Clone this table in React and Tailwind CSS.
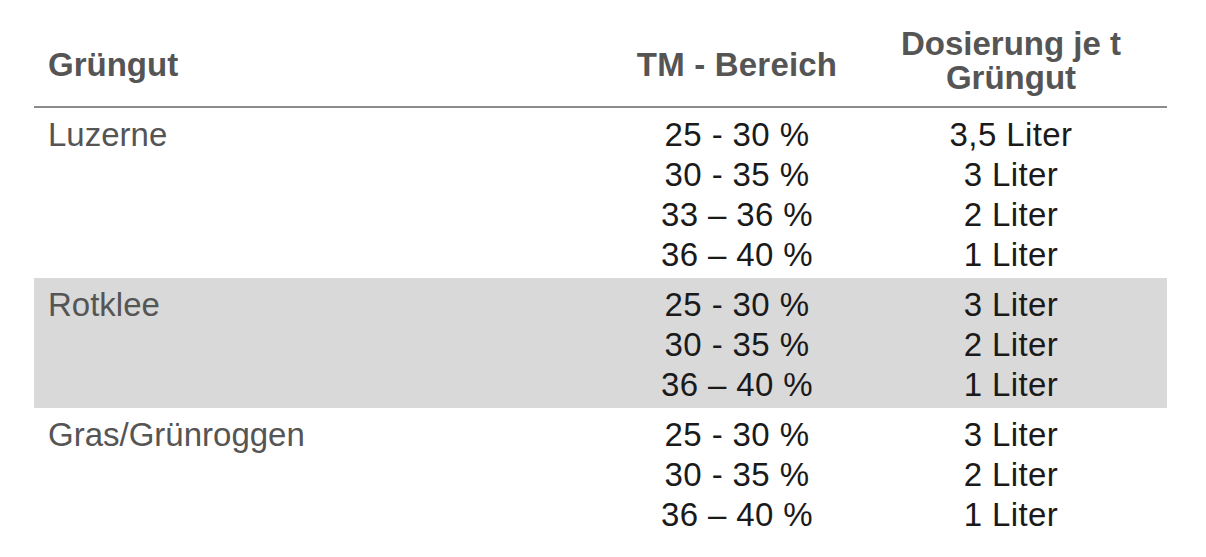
const groups = [
  {
    name: 'Luzerne',
    rows: [
      ['25 - 30 %', '3,5 Liter'],
      ['30 - 35 %', '3 Liter'],
      ['33 – 36 %', '2 Liter'],
      ['36 – 40 %', '1 Liter'],
    ],
  },
  {
    name: 'Rotklee',
    shaded: true,
    rows: [
      ['25 - 30 %', '3 Liter'],
      ['30 - 35 %', '2 Liter'],
      ['36 – 40 %', '1 Liter'],
    ],
  },
  {
    name: 'Gras/Grünroggen',
    rows: [
      ['25 - 30 %', '3 Liter'],
      ['30 - 35 %', '2 Liter'],
      ['36 – 40 %', '1 Liter'],
    ],
  },
]

export default function App() {
  return (
    <div className="min-h-[557px] w-[1206px] bg-white font-['Liberation_Sans',Arial,sans-serif]">
      <div className="ml-[34px] w-[1133px]">
        {/* Kopfzeile */}
        <div className="grid grid-cols-[585px_236px_312px] items-center border-b-2 border-[#8c8c8c] pt-[27px] pb-[11px] text-[33px] font-bold leading-[34px] text-[#555]">
          <div className="pl-[14px] pt-[7px]">Grüngut</div>
          <div className="pt-[7px] text-center tracking-[0.2px]">TM - Bereich</div>
          <div className="text-center">
            Dosierung je t
            <br />
            Grüngut
          </div>
        </div>

        {groups.map((g) => (
          <div
            key={g.name}
            className={`grid grid-cols-[585px_236px_312px] pt-[7px] pb-[3px] text-[33px] leading-[40px] ${g.shaded ? 'bg-[#d9d9d9]' : ''}`}
          >
            <div className="pl-[14px] text-[#555]">{g.name}</div>
            <div className="flex flex-col text-center tracking-[0.4px] text-[#1a1a1a]">
              {g.rows.map((r, i) => (
                <div key={i} className="h-10">{r[0]}</div>
              ))}
            </div>
            <div className="flex flex-col text-center tracking-[0.4px] text-[#1a1a1a]">
              {g.rows.map((r, i) => (
                <div key={i} className="h-10">{r[1]}</div>
              ))}
            </div>
          </div>
        ))}
      </div>
    </div>
  )
}
